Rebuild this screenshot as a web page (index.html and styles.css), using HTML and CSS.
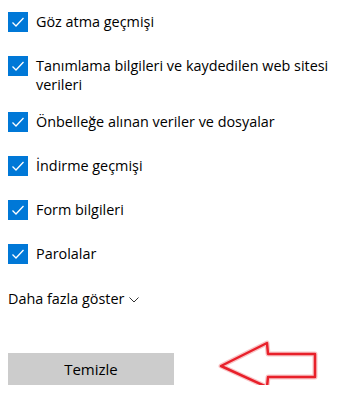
FILE: index.html
```html
<!DOCTYPE html>
<html lang="tr">
<head>
<meta charset="utf-8">
<link rel="stylesheet" href="styles.css">
</head>
<body>
<div class="panel">
  <ul class="options">
    <li class="option"><span class="box"><svg viewBox="0 0 20 20"><path d="M4.5 10.5 L8 14 L15.5 6"/></svg></span><span class="label">Göz atma geçmişi</span></li>
    <li class="option"><span class="box"><svg viewBox="0 0 20 20"><path d="M4.5 10.5 L8 14 L15.5 6"/></svg></span><span class="label">Tanımlama bilgileri ve kaydedilen web sitesi verileri</span></li>
    <li class="option"><span class="box"><svg viewBox="0 0 20 20"><path d="M4.5 10.5 L8 14 L15.5 6"/></svg></span><span class="label">Önbelleğe alınan veriler ve dosyalar</span></li>
    <li class="option"><span class="box"><svg viewBox="0 0 20 20"><path d="M4.5 10.5 L8 14 L15.5 6"/></svg></span><span class="label">İndirme geçmişi</span></li>
    <li class="option"><span class="box"><svg viewBox="0 0 20 20"><path d="M4.5 10.5 L8 14 L15.5 6"/></svg></span><span class="label">Form bilgileri</span></li>
    <li class="option"><span class="box"><svg viewBox="0 0 20 20"><path d="M4.5 10.5 L8 14 L15.5 6"/></svg></span><span class="label">Parolalar</span></li>
  </ul>
  <div class="more">Daha fazla göster <svg class="chev" viewBox="0 0 10 6"><path d="M0.5 0.5 L5 5 L9.5 0.5"/></svg></div>
  <div class="actions">
    <button class="clear">Temizle</button>
    <svg class="arrow" viewBox="0 0 104 54">
      <path class="glow" d="M5 26 L51 3 L52 14 L99 14 L99 37 L52 37 L51 47 Z"/>
      <path class="line" d="M5 26 L51 3 L52 14 L99 14 L99 37 L52 37 L51 47 Z"/>
    </svg>
  </div>
</div>
</body>
</html>
```
FILE: styles.css
```css
html, body {
  margin: 0;
  padding: 0;
  background: #ffffff;
}
body {
  font-family: "Open Sans", "Noto Sans", sans-serif;
  font-size: 14.4px;
  color: #000000;
}
.panel {
  width: 331px;
  padding: 6px 0 0 8px;
}
.options {
  list-style: none;
  margin: 0;
  padding: 0;
  display: flex;
  flex-direction: column;
  gap: 12px;
}
.option {
  display: flex;
  align-items: flex-start;
  gap: 8px;
  min-height: 32px;
}
.box {
  flex: none;
  width: 20px;
  height: 20px;
  margin-top: 6px;
  background: #0078d7;
  display: flex;
}
.box svg {
  width: 20px;
  height: 20px;
  fill: none;
  stroke: #ffffff;
  stroke-width: 1.3;
}
.label {
  padding-top: 6px;
  line-height: 19px;
}
.more {
  margin-top: 19px;
  line-height: 20px;
  display: flex;
  align-items: center;
  gap: 5px;
}
.chev {
  width: 10px;
  height: 6px;
  fill: none;
  stroke: #333333;
  stroke-width: 1;
  margin-top: 2px;
}
.actions {
  margin-top: 44px;
  display: flex;
  align-items: center;
}
.clear {
  width: 166px;
  height: 32px;
  border: none;
  background: #cccccc;
  font-family: inherit;
  font-size: 15px;
  color: #000000;
  padding: 0;
}
.arrow {
  width: 104px;
  height: 54px;
  margin: -13px 0 -9px 42px;
  fill: none;
  stroke-linejoin: round;
}
.arrow .glow {
  stroke: #f4a0a4;
  stroke-width: 5;
  opacity: 0.6;
}
.arrow .line {
  stroke: #e8202a;
  stroke-width: 2.5;
}
```
